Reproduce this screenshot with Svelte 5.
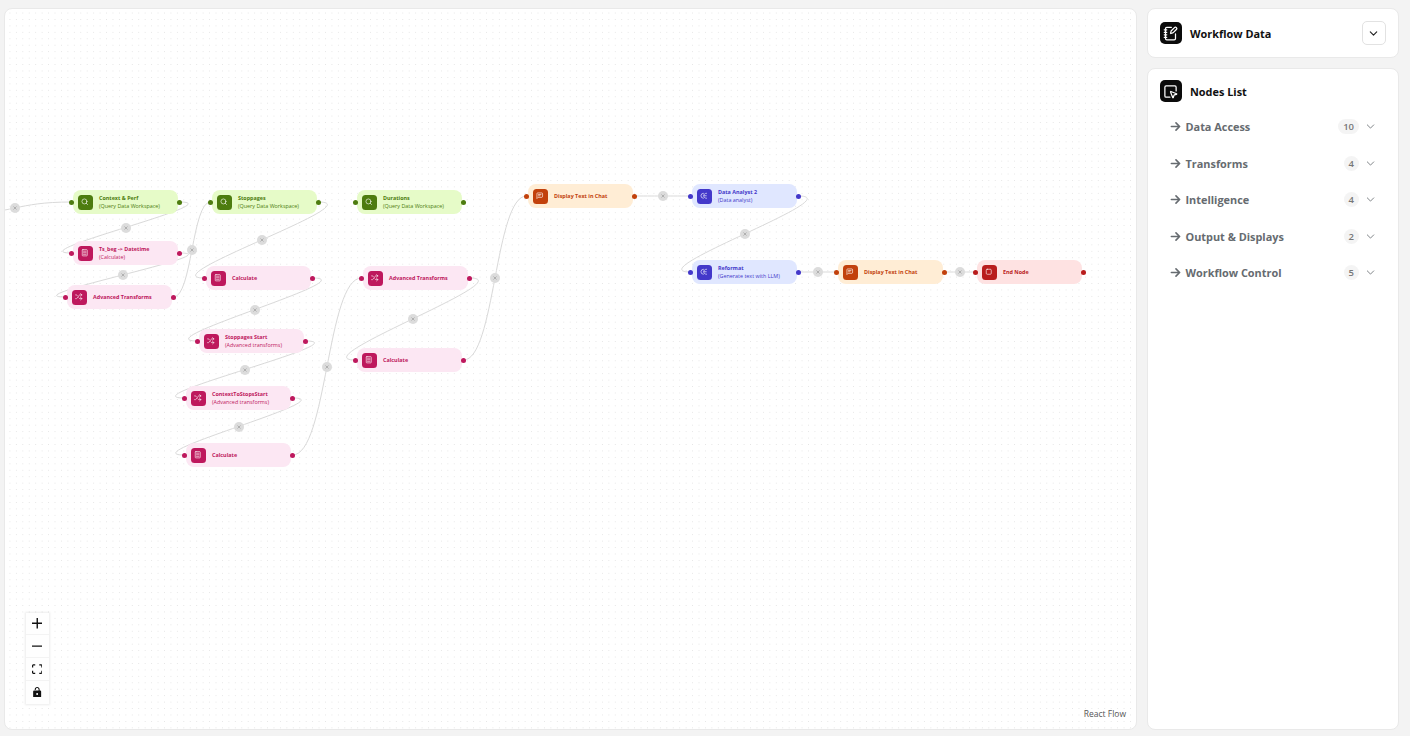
<script lang="ts">
	type Kind = 'data' | 'calc' | 'shuffle' | 'chat' | 'llm' | 'end';

	interface FlowNode {
		id: string;
		x: number;
		y: number;
		tone: string;
		icon: Kind;
		title: string;
		sub?: string;
	}

	const W = 105;

	const nodes: FlowNode[] = [
		{ id: 'ctx', x: 73, y: 190, tone: 'lime', icon: 'data', title: 'Context & Perf', sub: '(Query Data Workspace)' },
		{ id: 'ts', x: 73, y: 241, tone: 'pink', icon: 'calc', title: 'Ts_beg -> Datetime', sub: '(Calculate)' },
		{ id: 'adv', x: 67, y: 285, tone: 'pink', icon: 'shuffle', title: 'Advanced Transforms' },
		{ id: 'stop', x: 212, y: 190, tone: 'lime', icon: 'data', title: 'Stoppages', sub: '(Query Data Workspace)' },
		{ id: 'calc1', x: 206, y: 266, tone: 'pink', icon: 'calc', title: 'Calculate' },
		{ id: 'start', x: 199, y: 329, tone: 'pink', icon: 'shuffle', title: 'Stoppages Start', sub: '(Advanced transforms)' },
		{ id: 'c2s', x: 186, y: 386, tone: 'pink', icon: 'shuffle', title: 'ContextToStopsStart', sub: '(Advanced transforms)' },
		{ id: 'calc2', x: 186, y: 443, tone: 'pink', icon: 'calc', title: 'Calculate' },
		{ id: 'dur', x: 357, y: 190, tone: 'lime', icon: 'data', title: 'Durations', sub: '(Query Data Workspace)' },
		{ id: 'adv2', x: 363, y: 266, tone: 'pink', icon: 'shuffle', title: 'Advanced Transforms' },
		{ id: 'calc3', x: 357, y: 348, tone: 'pink', icon: 'calc', title: 'Calculate' },
		{ id: 'chat1', x: 528, y: 184, tone: 'orange', icon: 'chat', title: 'Display Text in Chat' },
		{ id: 'da2', x: 692, y: 184, tone: 'indigo', icon: 'llm', title: 'Data Analyst 2', sub: '(Data analyst)' },
		{ id: 'ref', x: 692, y: 260, tone: 'indigo', icon: 'llm', title: 'Reformat', sub: '(Generate text with LLM)' },
		{ id: 'chat2', x: 838, y: 260, tone: 'orange', icon: 'chat', title: 'Display Text in Chat' },
		{ id: 'end', x: 977, y: 260, tone: 'red', icon: 'end', title: 'End Node' }
	];

	const links: [string, string][] = [
		['ctx', 'ts'],
		['ts', 'adv'],
		['adv', 'stop'],
		['stop', 'calc1'],
		['calc1', 'start'],
		['start', 'c2s'],
		['c2s', 'calc2'],
		['calc2', 'adv2'],
		['adv2', 'calc3'],
		['calc3', 'chat1'],
		['chat1', 'da2'],
		['da2', 'ref'],
		['ref', 'chat2'],
		['chat2', 'end']
	];

	// bezier like react flow's, backward edges loop out by sqrt of the distance
	function offset(d: number) {
		return d >= 0 ? 0.5 * d : 5.2 * Math.sqrt(-d);
	}

	function edge(sx: number, sy: number, tx: number, ty: number) {
		const o = offset(tx - sx);
		const c1 = sx + o;
		const c2 = tx - o;
		return {
			d: `M${sx},${sy} C${c1},${sy} ${c2},${ty} ${tx},${ty}`,
			lx: 0.125 * sx + 0.375 * c1 + 0.375 * c2 + 0.125 * tx,
			ly: (sy + ty) / 2
		};
	}

	const byId = new Map(nodes.map((n) => [n.id, n]));
	const edges = [
		edge(-42, 214, 71.5, 202),
		...links.map(([a, b]) => {
			const s = byId.get(a)!;
			const t = byId.get(b)!;
			return edge(s.x + W + 1.5, s.y + 12, t.x - 1.5, t.y + 12);
		})
	];

	const groups = [
		{ name: 'Data Access', count: 10 },
		{ name: 'Transforms', count: 4 },
		{ name: 'Intelligence', count: 4 },
		{ name: 'Output & Displays', count: 2 },
		{ name: 'Workflow Control', count: 5 }
	];
</script>

{#snippet nodeIcon(kind: Kind)}
	<svg viewBox="0 0 24 24" class="node-glyph">
		{#if kind === 'data'}
			<circle cx="11" cy="11" r="8" />
			<path d="m21 21-4.3-4.3" />
		{:else if kind === 'calc'}
			<rect x="4" y="2" width="16" height="20" rx="2" />
			<path d="M8 7h8M8 12h8M8 17h8" />
		{:else if kind === 'shuffle'}
			<path d="m18 14 4 4-4 4" />
			<path d="m18 2 4 4-4 4" />
			<path d="M2 18h1.973a4 4 0 0 0 3.3-1.7l5.454-8.6a4 4 0 0 1 3.3-1.7H22" />
			<path d="M2 6h1.972a4 4 0 0 1 3.6 2.2" />
			<path d="M22 18h-6.041a4 4 0 0 1-3.3-1.8l-.359-.45" />
		{:else if kind === 'chat'}
			<path d="M21 15a2 2 0 0 1-2 2H7l-4 4V5a2 2 0 0 1 2-2h14a2 2 0 0 1 2 2z" />
			<path d="M8 8h8M8 12h5" />
		{:else if kind === 'llm'}
			<path d="M11 4a8 8 0 0 0 0 16" />
			<path d="M21 4c-6 0-9 3.500-9 8s3 8 9 8" />
			<path d="M13 12h7" />
		{:else}
			<rect x="4" y="4" width="16" height="16" rx="3" />
		{/if}
	</svg>
{/snippet}

{#snippet chevron(cls: string)}
	<svg viewBox="0 0 24 24" class={cls}><path d="m5 8.500 7 7 7-7" /></svg>
{/snippet}

<div class="page">
	<main class="canvas">
		<div class="viewport">
			<svg class="wires" width="1410" height="736">
				<defs>
					<pattern id="dots" x="15.9" y="19" width="6.44" height="6.44" patternUnits="userSpaceOnUse">
						<circle cx="0.5" cy="0.5" r="0.5" fill="#dedede" />
					</pattern>
				</defs>
				<rect width="1410" height="736" fill="url(#dots)" />
				{#each edges as e}
					<path d={e.d} class="wire" />
				{/each}
			</svg>

			{#each edges as e}
				<span class="edge-label" style="left:{e.lx}px;top:{e.ly}px">
					<svg viewBox="0 0 10 10"><path d="M3.500 3.500l3 3M6.500 3.500l-3 3" /></svg>
				</span>
			{/each}

			{#each nodes as n (n.id)}
				<div class="node {n.tone}" style="left:{n.x}px;top:{n.y}px">
					<i class="handle left"></i>
					<span class="node-icon">{@render nodeIcon(n.icon)}</span>
					<div class="node-text">
						<b>{n.title}</b>
						{#if n.sub}<small>{n.sub}</small>{/if}
					</div>
					<i class="handle right"></i>
				</div>
			{/each}
		</div>

		<div class="controls">
			<button aria-label="zoom in">
				<svg viewBox="0 0 32 32"><path d="M32 18.133H18.133V32h-4.266V18.133H0v-4.266h13.867V0h4.266v13.867H32z" /></svg>
			</button>
			<button aria-label="zoom out">
				<svg viewBox="0 0 32 5"><path d="M0 0h32v4.200H0z" /></svg>
			</button>
			<button aria-label="fit view">
				<svg viewBox="0 0 32 30"><path d="M3.692 4.630c0-.530.400-.938.939-.938h5.215V0H4.708C2.130 0 0 2.054 0 4.630v5.216h3.692V4.631zM27.354 0h-5.200v3.692h5.170c.530 0 .984.400.984.939v5.215H32V4.631A4.624 4.624 0 0027.354 0zm.954 24.830c0 .532-.400.940-.939.940h-5.215v3.768h5.215c2.577 0 4.631-2.130 4.631-4.707v-5.139h-3.692v5.139zm-23.677.940c-.531 0-.939-.400-.939-.940v-5.138H0v5.139c0 2.577 2.130 4.707 4.708 4.707h5.138V25.770H4.631z" /></svg>
			</button>
			<button aria-label="toggle lock">
				<svg viewBox="0 0 25 32"><path d="M21.333 10.667H19.810V7.619C19.810 3.429 16.380 0 12.190 0c-4.114 0-7.390 3.429-7.390 7.619v1.500h3.200V7.619c0-2.400 1.900-4.400 4.190-4.400 2.360 0 4.420 2 4.420 4.400v3.048H3.047A3.056 3.056 0 000 13.714v15.238A3.056 3.056 0 003.048 32h18.285a3.056 3.056 0 003.048-3.048V13.714a3.056 3.056 0 00-3.048-3.047zM12.190 24.533a3.056 3.056 0 01-3.047-3.047 3.056 3.056 0 013.047-3.048 3.056 3.056 0 013.048 3.048 3.056 3.056 0 01-3.048 3.047z" /></svg>
			</button>
		</div>

		<span class="attribution">React Flow</span>
	</main>

	<aside class="side">
		<section class="card head">
			<span class="badge-icon">
				<svg viewBox="0 0 24 24">
					<path d="M13.400 2H6a2 2 0 0 0-2 2v16a2 2 0 0 0 2 2h12a2 2 0 0 0 2-2v-7.400" />
					<path d="M2 6h4M2 10h4M2 14h4M2 18h4" />
					<path d="M21.378 5.626a1 1 0 1 0-3.004-3.004l-5.010 5.012a2 2 0 0 0-.506.854l-.837 2.870a.5.5 0 0 0 .620.620l2.870-.837a2 2 0 0 0 .854-.506z" />
				</svg>
			</span>
			<h2>Workflow Data</h2>
			<button class="collapse" aria-label="collapse">{@render chevron('chev dark')}</button>
		</section>

		<section class="card list">
			<div class="list-head">
				<span class="badge-icon">
					<svg viewBox="0 0 24 24">
						<path d="M12.034 12.681a.498.498 0 0 1 .647-.647l9 3.500a.5.5 0 0 1-.033.943l-3.444 1.068a1 1 0 0 0-.660.660l-1.067 3.443a.5.5 0 0 1-.943.033z" />
						<path d="M21 11V5a2 2 0 0 0-2-2H5a2 2 0 0 0-2 2v14a2 2 0 0 0 2 2h6" />
					</svg>
				</span>
				<h2>Nodes List</h2>
			</div>
			<ul>
				{#each groups as g}
					<li>
						<svg viewBox="0 0 24 24" class="arrow"><path d="M3 12h18M13 4l8 8-8 8" /></svg>
						<span class="group-name">{g.name}</span>
						<span class="count">{g.count}</span>
						{@render chevron('chev')}
					</li>
				{/each}
			</ul>
		</section>
	</aside>
</div>

<style>
	:global(body) {
		margin: 0;
		background: #f3f3f3;
		font-family: 'Open Sans', sans-serif;
	}

	.page {
		display: flex;
		gap: 9.500px;
		height: 736px;
		box-sizing: border-box;
		padding: 8px 11.500px 6.500px 4px;
	}

	.canvas,
	.card {
		background: #fff;
		border: 1px solid #e9e9e9;
		border-radius: 8px;
		box-sizing: border-box;
	}

	.canvas {
		position: relative;
		flex: 1;
		overflow: hidden;
	}

	/* flow coordinates are page pixels, so shift back by the card's corner */
	.viewport {
		position: absolute;
		left: -5px;
		top: -9px;
		width: 1410px;
		height: 736px;
	}

	.wires {
		position: absolute;
		left: 0;
		top: 0;
	}

	.wire {
		fill: none;
		stroke: #d9d9d9;
		stroke-width: 1;
	}

	.edge-label {
		position: absolute;
		width: 10px;
		height: 10px;
		margin: -5px 0 0 -5px;
		border-radius: 50%;
		background: #dcdcdc;
		display: flex;
	}

	.edge-label svg {
		width: 10px;
		height: 10px;
	}

	.edge-label path {
		fill: none;
		stroke: #9c9c9c;
		stroke-width: 0.7;
	}

	.node {
		position: absolute;
		width: 105px;
		height: 24px;
		box-sizing: border-box;
		border-radius: 8px;
		padding-left: 4.500px;
		display: flex;
		align-items: center;
		gap: 6.500px;
		background: var(--bg);
		color: var(--fg);
	}

	.lime {
		--bg: #e6fbc8;
		--fg: #4d7c0f;
	}

	.pink {
		--bg: #fce7f3;
		--fg: #be185d;
	}

	.orange {
		--bg: #ffedd5;
		--fg: #c2410c;
	}

	.indigo {
		--bg: #e0e7ff;
		--fg: #4338ca;
	}

	.red {
		--bg: #fee2e2;
		--fg: #b91c1c;
	}

	.node-icon {
		width: 15px;
		height: 15px;
		flex: none;
		border-radius: 3.500px;
		background: var(--fg);
		display: flex;
		align-items: center;
		justify-content: center;
	}

	.node-glyph {
		width: 7.500px;
		height: 7.500px;
		fill: none;
		stroke: #fff;
		stroke-width: 2;
		stroke-linecap: round;
		stroke-linejoin: round;
	}

	.node-text {
		display: flex;
		flex-direction: column;
		gap: 2px;
		min-width: 0;
		padding-top: 0.500px;
		white-space: nowrap;
	}

	.node-text b {
		font-size: 5.400px;
		line-height: 6px;
		font-weight: 700;
	}

	.node-text small {
		font-size: 5.400px;
		line-height: 6px;
		font-weight: 400;
	}

	.handle {
		position: absolute;
		top: 9.500px;
		width: 5px;
		height: 5px;
		border-radius: 50%;
		background: var(--fg);
	}

	.handle.left {
		left: -4px;
	}

	.handle.right {
		right: -4px;
	}

	.controls {
		position: absolute;
		left: 20.500px;
		bottom: 25px;
		display: flex;
		flex-direction: column;
		box-shadow: 0 0 2px 1px rgba(0, 0, 0, 0.08);
	}

	.controls button {
		width: 23px;
		height: 22.700px;
		padding: 5px;
		border: 0;
		border-bottom: 1px solid #f3f3f3;
		background: #fefefe;
		display: flex;
		align-items: center;
		justify-content: center;
	}

	.controls button:last-child {
		border-bottom: 0;
	}

	.controls svg {
		width: 10.500px;
		height: 10.500px;
		fill: #111;
	}

	.attribution {
		position: absolute;
		right: 10px;
		bottom: 9px;
		font-size: 8.500px;
		line-height: 12px;
		color: #555;
	}

	.side {
		width: 252px;
		flex: none;
		display: flex;
		flex-direction: column;
		gap: 9.500px;
	}

	.head {
		height: 50px;
		display: flex;
		align-items: center;
		padding: 0 12px;
	}

	.badge-icon {
		width: 22px;
		height: 22px;
		flex: none;
		border-radius: 5px;
		background: #0b0b0b;
		display: flex;
		align-items: center;
		justify-content: center;
	}

	.badge-icon svg {
		width: 15px;
		height: 15px;
		fill: none;
		stroke: #fff;
		stroke-width: 2;
		stroke-linecap: round;
		stroke-linejoin: round;
	}

	h2 {
		margin: 0 0 0 8.500px;
		font-size: 10.900px;
		font-weight: 700;
		color: #111;
	}

	.collapse {
		margin-left: auto;
		width: 24px;
		height: 24px;
		padding: 0;
		border: 1px solid #e2e2e2;
		border-radius: 5px;
		background: #fff;
		display: flex;
		align-items: center;
		justify-content: center;
	}

	.chev {
		width: 11px;
		height: 11px;
		fill: none;
		stroke: #666b70;
		stroke-width: 1.800;
		stroke-linecap: round;
		stroke-linejoin: round;
	}

	.chev.dark {
		stroke: #222;
		stroke-width: 2.500;
	}

	.list {
		flex: 1;
		padding: 11.500px 12px 0;
	}

	.list-head {
		display: flex;
		align-items: center;
	}

	ul {
		list-style: none;
		margin: 6.500px 0 0;
		padding: 0;
	}

	li {
		height: 36.500px;
		display: flex;
		align-items: center;
		padding-left: 10px;
		padding-right: 9.500px;
		color: #666b70;
	}

	.arrow {
		width: 11px;
		height: 11px;
		flex: none;
		margin-right: 5px;
		fill: none;
		stroke: #666b70;
		stroke-width: 3.500;
		stroke-linecap: round;
		stroke-linejoin: round;
	}

	.group-name {
		font-size: 10.900px;
		font-weight: 700;
	}

	.count {
		margin-left: auto;
		margin-right: 6px;
		min-width: 15px;
		height: 15px;
		box-sizing: border-box;
		padding: 0 5px;
		border-radius: 8px;
		background: #f4f4f4;
		font-size: 9.500px;
		font-weight: 600;
		line-height: 15px;
		text-align: center;
		color: #777;
	}
</style>
